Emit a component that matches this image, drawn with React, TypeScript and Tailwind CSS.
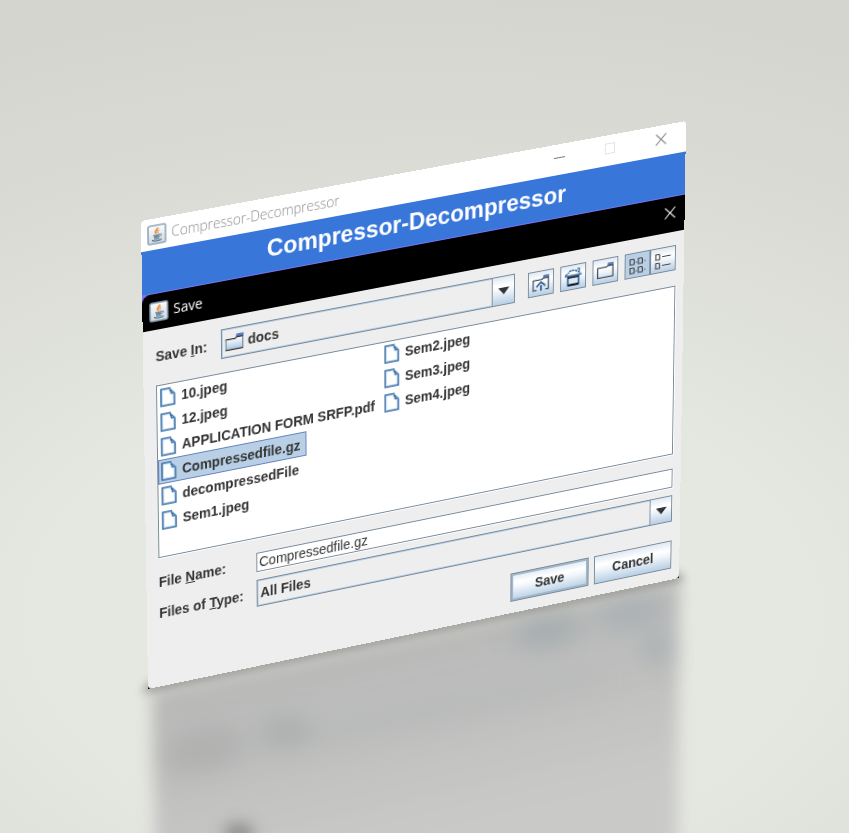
import { useState } from "react";
import type { ReactNode } from "react";

type Point = [number, number];

const PANEL_WIDTH = 577;
const PANEL_HEIGHT = 476;

/** Corners of the tilted panel: top left, top right, bottom right, bottom left. */
const CORNERS: [Point, Point, Point, Point] = [
  [5, 101],
  [550, 1],
  [543, 458],
  [12, 569],
];

/** Perspective matrix that carries a width x height box onto four corners. */
function perspectiveTo(corners: [Point, Point, Point, Point], width: number, height: number): string {
  const [[x0, y0], [x1, y1], [x2, y2], [x3, y3]] = corners;
  const dx1 = x1 - x2;
  const dy1 = y1 - y2;
  const dx2 = x3 - x2;
  const dy2 = y3 - y2;
  const sx = x0 - x1 + x2 - x3;
  const sy = y0 - y1 + y2 - y3;
  const det = dx1 * dy2 - dx2 * dy1;
  const g = (sx * dy2 - dx2 * sy) / det;
  const h = (dx1 * sy - sx * dy1) / det;
  const m = [
    (x1 - x0 + g * x1) / width, (y1 - y0 + g * y1) / width, 0, g / width,
    (x3 - x0 + h * x3) / height, (y3 - y0 + h * y3) / height, 0, h / height,
    0, 0, 1, 0,
    x0, y0, 0, 1,
  ];
  return `matrix3d(${m.join(",")})`;
}

const METAL =
  "border border-[#7a8a99] bg-[linear-gradient(to_bottom,#dfe9f3_0%,#ffffff_32%,#f4f8fb_48%,#b8cfe5_100%)]";

function JavaIcon() {
  return (
    <svg viewBox="0 0 20 20" className="size-5 shrink-0" aria-hidden="true">
      <defs>
        <linearGradient id="tile" x1="0" y1="0" x2="0" y2="1">
          <stop offset="0" stopColor="#fdfdfd" />
          <stop offset="1" stopColor="#cfd9e0" />
        </linearGradient>
      </defs>
      <rect x="1" y="1" width="18" height="18" rx="1.5" fill="url(#tile)" stroke="#8fa5b8" strokeWidth="1.6" />
      <path d="M10.6 3.4c1.2 1.8-2.6 2.6-2.1 4.2.2.8 1 1.2 1 2" fill="none" stroke="#ec8a2b" strokeWidth="1.7" />
      <path d="M12.6 5.8c-1.6.5-2.2 1.2-1.5 2 .5.6.1 1.3-.4 1.7" fill="none" stroke="#f0a050" strokeWidth="1.3" />
      <path d="M6.4 10.6c1.8.7 5 .7 6.8 0M7 12.5c1.6.5 4.1.5 5.6 0M5 15.3c2.6 1.3 7.4 1.3 9.9 0" fill="none" stroke="#4f7390" strokeWidth="1.3" />
      <path d="M13.4 10.3c1.8-.3 2 1.5 0 2.2" fill="none" stroke="#4f7390" strokeWidth="1" />
      <path d="M7.2 14.1h5.4" stroke="#5c7d98" strokeWidth="1.1" />
    </svg>
  );
}

function DocumentIcon() {
  return (
    <svg viewBox="0 0 16 19" className="h-[19px] w-4 shrink-0" aria-hidden="true">
      <path d="M1 1h9.8l4.2 5V18H1z" fill="#fff" />
      <path d="M2.4 17V2.4h7M2.4 16.6h11.2V8" fill="none" stroke="#cfe1f2" strokeWidth="1.2" />
      <path d="M9 1.6h2.2L15 6v1.4h-3.4l-1-2.2z" fill="#b5cfe8" />
      <path d="M11 1H1v17h14V6.4" fill="none" stroke="#3b72a8" strokeWidth="1.6" />
      <path d="M10 1.8l4.8 4.8M9.8 3.4l1.6 1v2.2h2.4" fill="none" stroke="#3b72a8" strokeWidth="1.2" />
    </svg>
  );
}

function FolderIcon() {
  return (
    <svg viewBox="0 0 20 18" className="h-[18px] w-5 shrink-0" aria-hidden="true">
      <defs>
        <linearGradient id="folder" x1="0" y1="0" x2="0" y2="1">
          <stop offset="0" stopColor="#fff" />
          <stop offset="1" stopColor="#a9c6e2" />
        </linearGradient>
      </defs>
      <path d="M12.4 1h7.2v3.6h-8.2z" fill="#5d7fc4" />
      <path d="M1.2 5.6h10l1.2-1.2h6.2v12H1.2z" fill="url(#folder)" />
      <path d="M.6 5.6h10.6l1.2-1.2h6.8M.6 16.4h18.6" fill="none" stroke="#333" strokeWidth="1.2" />
      <path d="M1.2 5.6v10.8M18.8 4.6v11.8" stroke="#6a7f95" strokeWidth="1.1" />
    </svg>
  );
}

function UpFolderIcon() {
  return (
    <svg viewBox="0 0 20 18" className="h-[18px] w-5" aria-hidden="true">
      <path d="M12.5 1h6.3v3.4h-6.3z" fill="#5d7fc4" />
      <path d="M5.4 15.6H1.6V5.4h9.6l1.2-1.2h5.8v11.4h-3.4" fill="none" stroke="#444f5a" strokeWidth="1.3" />
      <path d="M5.8 12.6c0-2 1.8-2.4 2.8-3.4l1.5-1.2 1.5 1.2c1 1 2.8 1.4 2.8 3.4" fill="none" stroke="#2f6397" strokeWidth="1.8" />
      <path d="M10.1 11v5.6" fill="none" stroke="#2f6397" strokeWidth="2" />
    </svg>
  );
}

function HomeIcon() {
  return (
    <svg viewBox="0 0 20 18" className="h-[18px] w-5" aria-hidden="true">
      <path d="M1.4 6.4l2-1.2 2-1.2M5.6 2.8l3.2-.9 3.4.5 2.4 1.2 3.6 2.6" fill="none" stroke="#2f6397" strokeWidth="1.5" strokeDasharray="2.6 .7" />
      <path d="M14.4 1.2h2.2v2.6" fill="none" stroke="#2f6397" strokeWidth="1.3" />
      <path d="M.8 7.2h18.4" stroke="#3f74aa" strokeWidth="1.6" />
      <path d="M4.2 8v8.6h11.6V8" fill="#dbe8f4" stroke="#2f6397" strokeWidth="1.8" />
      <path d="M4.4 9h11.2M4.4 16.6h11.2" stroke="#000" strokeWidth="1.6" />
    </svg>
  );
}

function NewFolderIcon() {
  return (
    <svg viewBox="0 0 20 18" className="h-[18px] w-5" aria-hidden="true">
      <path d="M12.5 1h6.3v3.2h-6.3z" fill="#5d7fc4" />
      <path d="M1.6 5.2h9.6l1.4-1.2h5.6v11.4H1.6z" fill="none" stroke="#4a4f55" strokeWidth="1.3" />
    </svg>
  );
}

function ListViewIcon() {
  return (
    <svg viewBox="0 0 20 18" className="h-[18px] w-5" fill="none" stroke="#444" strokeWidth="1.2" aria-hidden="true">
      <path d="M2 2.5h3.4l1 1V8H2zM11 2.5h3.4l1 1V8H11zM2 11.5h3.4l1 1V17H2zM11 11.5h3.4l1 1V17H11z" />
      <path d="M8 6h1.4M17.2 6h1.4M8 15h1.4M17.2 15h1.4" />
    </svg>
  );
}

function DetailsViewIcon() {
  return (
    <svg viewBox="0 0 20 18" className="h-[18px] w-5" fill="none" stroke="#444" strokeWidth="1.2" aria-hidden="true">
      <path d="M2 2.5h3.4l1 1V8H2zM2 11.5h3.4l1 1V17H2z" />
      <path d="M9 5.5h9.5M9 14.5h9.5" />
    </svg>
  );
}

function CloseIcon() {
  return (
    <svg viewBox="0 0 12 12" className="size-3" fill="none" stroke="currentColor" strokeWidth="1.1" aria-hidden="true">
      <path d="M.5.5l11 11M11.5.5l-11 11" />
    </svg>
  );
}

function ToolButton({ label, pressed, children }: { label: string; pressed?: boolean; children: ReactNode }) {
  const look = pressed ? "border border-[#7a8a99] bg-[#b8cfe5]" : METAL;
  return (
    <button
      type="button"
      aria-label={label}
      aria-pressed={pressed}
      className={`flex h-[26px] w-7 items-center justify-center ${look}`}
    >
      {children}
    </button>
  );
}

function ComboBox({ id, options, tall, icon }: { id: string; options: string[]; tall?: boolean; icon?: ReactNode }) {
  return (
    <div
      className={`flex min-w-0 flex-1 border border-[#7a8a99] shadow-[inset_0_0_0_1px_#b8cfe5] ${tall ? "h-[30px]" : "h-7"}`}
    >
      <div className="flex min-w-0 flex-1 items-center gap-1 pl-[3px]">
        {icon}
        <select id={id} className="min-w-0 flex-1 appearance-none bg-transparent font-bold outline-none">
          {options.map((option) => (
            <option key={option}>{option}</option>
          ))}
        </select>
      </div>
      <span className="flex w-6 items-center justify-center border-l border-[#7a8a99] bg-[linear-gradient(to_bottom,#dfe9f3_0%,#ffffff_32%,#f4f8fb_48%,#b8cfe5_100%)]">
        <svg viewBox="0 0 12 7" className="h-[7px] w-3" aria-hidden="true">
          <path d="M0 0h12L6 7z" fill="#333" />
        </svg>
      </span>
    </div>
  );
}

const COLUMNS = [
  ["10.jpeg", "12.jpeg", "APPLICATION FORM SRFP.pdf", "Compressedfile.gz", "decompressedFile", "Sem1.jpeg"],
  ["Sem2.jpeg", "Sem3.jpeg", "Sem4.jpeg"],
];

function SaveDialog() {
  const [fileName, setFileName] = useState("Compressedfile.gz");
  const [selected, setSelected] = useState("Compressedfile.gz");

  return (
    <section aria-label="Save" className="bg-[#7a72f0] pt-px">
      <header className="flex h-9 items-center gap-[5px] rounded-tl-lg bg-black pb-px pl-[7px] text-white">
        <JavaIcon />
        <h2 className="flex-1 font-['Open_Sans',sans-serif] text-sm font-normal">Save</h2>
        <button type="button" aria-label="Close dialog" className="flex h-full w-8 items-center justify-center pb-1 text-[#e4e4e4]">
          <CloseIcon />
        </button>
      </header>

      <div className="bg-black">
        <form
          className="rounded-b-[4px] bg-[#eeeeee] pt-3 pr-[9px] pb-3 pl-[13px] text-[#333]"
          onSubmit={(event) => event.preventDefault()}
        >
          <div className="flex items-center">
            <label htmlFor="folder-select" className="w-[68px]">
              Save <u>I</u>n:
            </label>
            <ComboBox id="folder-select" options={["docs"]} tall icon={<FolderIcon />} />
            <div className="ml-3.5 flex gap-[7px]">
              <ToolButton label="Up one level"><UpFolderIcon /></ToolButton>
              <ToolButton label="Home"><HomeIcon /></ToolButton>
              <ToolButton label="Create new folder"><NewFolderIcon /></ToolButton>
              <div className="flex">
                <ToolButton label="List view" pressed><ListViewIcon /></ToolButton>
                <ToolButton label="Details view"><DetailsViewIcon /></ToolButton>
              </div>
            </div>
          </div>

          <div className="mt-3.5 flex h-44 border border-[#7a8a99] bg-white shadow-[1px_1px_0_#fff]">
            {COLUMNS.map((files, index) => (
              <ul key={index} className="w-[236px]">
                {files.map((file) => (
                  <li key={file}>
                    <button
                      type="button"
                      onClick={() => {
                        setSelected(file);
                        setFileName(file);
                      }}
                      className={`flex h-[25px] items-center gap-1.5 border pr-1.5 pl-0.5 font-bold whitespace-nowrap ${
                        file === selected ? "border-[#6382bf] bg-[#b8cfe5]" : "border-transparent"
                      }`}
                    >
                      <DocumentIcon />
                      {file}
                    </button>
                  </li>
                ))}
              </ul>
            ))}
          </div>

          <div className="mt-[15px] flex items-center">
            <label htmlFor="file-name" className="w-[103px]">
              File <u>N</u>ame:
            </label>
            <input
              id="file-name"
              type="text"
              value={fileName}
              onChange={(event) => setFileName(event.target.value)}
              className="h-5 min-w-0 flex-1 border border-[#7a8a99] bg-white px-0.5 font-normal shadow-[1px_1px_0_#fff] outline-none"
            />
          </div>

          <div className="mt-2 flex items-center">
            <label htmlFor="file-type" className="w-[103px]">
              Files of <u>T</u>ype:
            </label>
            <ComboBox id="file-type" options={["All Files"]} />
          </div>

          <div className="mt-5 flex justify-end gap-1.5">
            <button type="submit" className={`h-[30px] w-[86px] font-bold shadow-[inset_0_0_0_2px_#a3b8cc] ${METAL}`}>
              Save
            </button>
            <button type="button" className={`h-[30px] w-[86px] font-bold ${METAL}`}>
              Cancel
            </button>
          </div>
        </form>
      </div>
    </section>
  );
}

/** Soft mirror image and contact shadow under the tilted panel. */
function Reflection() {
  return (
    <svg className="pointer-events-none absolute inset-0 size-full overflow-visible" aria-hidden="true">
      <defs>
        <linearGradient id="mirror" gradientUnits="userSpaceOnUse" x1="230" y1="500" x2="280" y2="713">
          <stop offset="0" stopColor="#b6b6b4" />
          <stop offset=".3" stopColor="#bbbcbb" />
          <stop offset=".6" stopColor="#c1c1c0" />
          <stop offset="1" stopColor="#c9c9c7" />
        </linearGradient>
        <filter id="soft" filterUnits="userSpaceOnUse" x="-60" y="380" width="700" height="460">
          <feGaussianBlur stdDeviation="8" />
        </filter>
        <filter id="softer" filterUnits="userSpaceOnUse" x="-60" y="380" width="700" height="460">
          <feGaussianBlur stdDeviation="12" />
        </filter>
        <filter id="contact" filterUnits="userSpaceOnUse" x="-60" y="400" width="700" height="240">
          <feGaussianBlur stdDeviation="5" />
        </filter>
      </defs>
      <polygon points="16,572 543,461 540,820 22,820" fill="url(#mirror)" filter="url(#soft)" />
      <g filter="url(#softer)">
        <ellipse cx="412" cy="512" rx="34" ry="12" fill="#9aa4aa" opacity=".75" transform="rotate(-11 412 512)" />
        <ellipse cx="495" cy="494" rx="34" ry="11" fill="#9ea8b0" opacity=".7" transform="rotate(-11 495 494)" />
        <ellipse cx="520" cy="529" rx="13" ry="15" fill="#9ea6ac" opacity=".7" />
        <ellipse cx="150" cy="612" rx="26" ry="14" fill="#a0a5a3" opacity=".7" />
        <ellipse cx="68" cy="630" rx="42" ry="22" fill="#a9a9a7" opacity=".6" transform="rotate(-14 68 630)" />
        <ellipse cx="280" cy="595" rx="200" ry="12" fill="#acb2b1" opacity=".35" transform="rotate(-11 280 595)" />
      </g>
      <ellipse cx="103" cy="713" rx="15" ry="9" fill="#82827f" filter="url(#soft)" />
      <polygon points="12,564 543,453 548,460 6,573" fill="#6e6e6b" opacity=".75" filter="url(#contact)" />
    </svg>
  );
}

export default function App() {
  return (
    <main className="min-h-screen overflow-hidden bg-[radial-gradient(ellipse_120%_75%_at_50%_74%,#e8eae4_0%,#e4e6e0_40%,#dadbd5_75%,#d4d5cf_100%)] pt-[120px]">
      <div className="relative mx-auto w-[577px]">
        <Reflection />
        <div
          className="relative origin-top-left overflow-hidden rounded-t-[4px] bg-white font-['Liberation_Sans',Arial,sans-serif] text-sm leading-5 font-bold"
          style={{ transform: perspectiveTo(CORNERS, PANEL_WIDTH, PANEL_HEIGHT) }}
        >
          <header className="flex h-[31px] items-center gap-[5px] pl-1.5 text-[#8c8c8c]">
            <JavaIcon />
            <span className="flex-1 font-['Open_Sans',sans-serif] text-sm font-light">Compressor-Decompressor</span>
            <div className="flex h-full pb-1">
              <button type="button" aria-label="Minimize" className="flex w-[55px] items-center justify-center">
                <span className="h-px w-3 bg-[#777]" />
              </button>
              <button type="button" aria-label="Maximize" disabled className="flex w-[55px] items-center justify-center">
                <span className="size-[11px] border border-[#e3e3e3]" />
              </button>
              <button type="button" aria-label="Close window" className="flex w-[55px] items-center justify-center">
                <CloseIcon />
              </button>
            </div>
          </header>
          <div className="flex h-[43px] items-center justify-center bg-[#3876da] pb-1 text-2xl text-white">
            <h1>Compressor-Decompressor</h1>
          </div>
          <SaveDialog />
        </div>
      </div>
    </main>
  );
}
